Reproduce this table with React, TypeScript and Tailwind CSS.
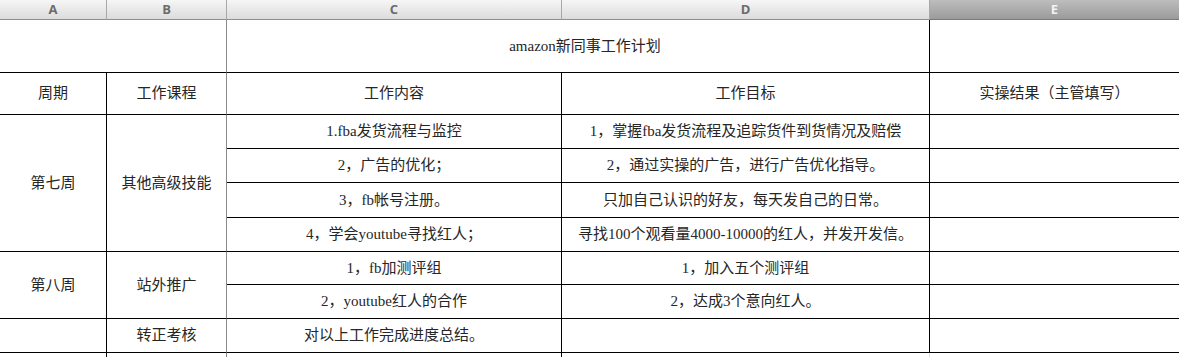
import React from "react";

const font = {
  fontFamily: '"Liberation Serif", "Noto Sans CJK SC", serif',
};

function Cell({
  children,
  className = "",
}: {
  children?: React.ReactNode;
  className?: string;
}) {
  return (
    <div
      className={`flex items-center justify-center text-[15px] leading-none text-[#262626] bg-white whitespace-nowrap overflow-hidden ${className}`}
    >
      {children}
    </div>
  );
}

export default function App() {
  const hdr =
    "flex items-center justify-center text-[13px] font-bold text-[#6b6b6b] bg-gradient-to-b from-[#f6f6f6] to-[#dcdcdc] border-b border-b-[#8f8f8f] border-r border-r-[#a8a8a8]";
  const bk = "border-black";
  const hf = { fontFamily: '"Open Sans", "Liberation Sans", sans-serif' };
  return (
    <div className="w-[1179px] h-[357px] overflow-hidden bg-white" style={font}>
      <div className="grid grid-cols-[107px_120px_335px_368px_249px] grid-rows-[20px_53px_42px_34px_34px_35px_34px_33px_34px_34px_20px]">
        {/* column headers */}
        <div className={hdr} style={hf}>A</div>
        <div className={hdr} style={hf}>B</div>
        <div className={hdr} style={hf}>C</div>
        <div className={`${hdr} border-r-[#6f6f6f]`} style={hf}>D</div>
        <div
          className="flex items-center justify-center text-[13px] font-bold text-[#f2f2f2] bg-gradient-to-b from-[#bdbdbd] to-[#9b9b9b] border-b border-b-[#7a7a7a]"
          style={hf}
        >
          E
        </div>

        {/* title row */}
        <Cell className={`col-span-2 border-b ${bk} border-r border-r-[#8a8a8a]`} />
        <Cell className={`col-span-2 border-b ${bk} border-r pl-[14px]`}>amazon新同事工作计划</Cell>
        <Cell className={`border-b ${bk}`} />

        {/* header row */}
        <Cell className={`border-b border-r ${bk}`}>周期</Cell>
        <Cell className={`border-b ${bk} border-r border-r-[#8a8a8a]`}>工作课程</Cell>
        <Cell className={`border-b border-r ${bk}`}>工作内容</Cell>
        <Cell className={`border-b border-r ${bk}`}>工作目标</Cell>
        <Cell className={`border-b ${bk}`}>实操结果（主管填写）</Cell>

        {/* week 7 */}
        <Cell className={`row-span-4 border-b border-r ${bk}`}>第七周</Cell>
        <Cell className={`row-span-4 border-b ${bk} border-r border-r-[#8a8a8a]`}>其他高级技能</Cell>
        <Cell className={`border-b border-r ${bk}`}>1.fba发货流程与监控</Cell>
        <Cell className={`border-b border-r ${bk}`}>1，掌握fba发货流程及追踪货件到货情况及赔偿</Cell>
        <Cell className={`border-b ${bk}`} />

        <Cell className={`border-b border-r ${bk}`}>2，广告的优化；</Cell>
        <Cell className={`border-b border-r ${bk}`}>2，通过实操的广告，进行广告优化指导。</Cell>
        <Cell className={`border-b ${bk}`} />

        <Cell className={`border-b border-r ${bk}`}>3，fb帐号注册。</Cell>
        <Cell className={`border-b border-r ${bk}`}>只加自己认识的好友，每天发自己的日常。</Cell>
        <Cell className={`border-b ${bk}`} />

        <Cell className={`border-b border-r ${bk}`}>4，学会youtube寻找红人；</Cell>
        <Cell className={`border-b border-r ${bk}`}>寻找100个观看量4000-10000的红人，并发开发信。</Cell>
        <Cell className={`border-b ${bk}`} />

        {/* week 8 */}
        <Cell className={`row-span-2 border-b border-r ${bk}`}>第八周</Cell>
        <Cell className={`row-span-2 border-b ${bk} border-r border-r-[#8a8a8a]`}>站外推广</Cell>
        <Cell className={`border-b border-r ${bk}`}>1，fb加测评组</Cell>
        <Cell className={`border-b border-r ${bk}`}>1，加入五个测评组</Cell>
        <Cell className={`border-b ${bk}`} />

        <Cell className={`border-b border-r ${bk}`}>2，youtube红人的合作</Cell>
        <Cell className={`border-b border-r ${bk}`}>2，达成3个意向红人。</Cell>
        <Cell className={`border-b ${bk}`} />

        {/* 转正 */}
        <Cell className={`border-b border-r ${bk}`} />
        <Cell className={`border-b ${bk} border-r border-r-[#8a8a8a]`}>转正考核</Cell>
        <Cell className={`border-b border-r ${bk}`}>对以上工作完成进度总结。</Cell>
        <Cell className={`border-b border-r ${bk}`} />
        <Cell className={`border-b ${bk}`} />

        {/* partial row */}
        <Cell className={`border-r ${bk}`} />
        <Cell className="border-r border-r-[#8a8a8a]" />
        <Cell className={`border-r ${bk}`} />
        <Cell className="border-r border-r-[#e0e0e0]" />
        <Cell />
      </div>
    </div>
  );
}
